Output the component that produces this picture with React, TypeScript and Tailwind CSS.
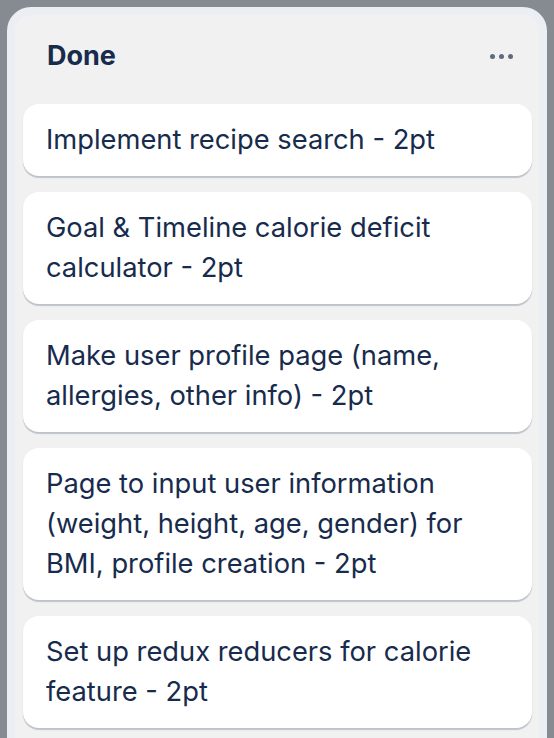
import React from "react";

const cards: string[][] = [
  ["Implement recipe search - 2pt"],
  ["Goal & Timeline calorie deficit", "calculator - 2pt"],
  ["Make user profile page (name,", "allergies, other info) - 2pt"],
  ["Page to input user information", "(weight, height, age, gender) for", "BMI, profile creation - 2pt"],
  ["Set up redux reducers for calorie", "feature - 2pt"],
];

export default function App() {
  return (
    <div
      className="h-[738px] w-[554px] overflow-hidden bg-[#868b91] pl-[7px] pr-[7px] pt-[7px]"
      style={{ fontFamily: "Inter, 'Noto Sans', sans-serif" }}
    >
      <div className="h-[760px] rounded-[24px] border-[8px] border-[#ebeff3] bg-[#f1f1f2] pl-[8px] pr-[7px] pt-[8px]">
        <div className="flex h-[66px] items-center justify-between pl-[24px] pr-[19px]">
          <span className="text-[27px] font-bold text-[#172b4d]">Done</span>
          <div className="flex items-center gap-[4px]">
            <span className="block h-[5px] w-[5px] rounded-full bg-[#5e6b7e]" />
            <span className="block h-[5px] w-[5px] rounded-full bg-[#5e6b7e]" />
            <span className="block h-[5px] w-[5px] rounded-full bg-[#5e6b7e]" />
          </div>
        </div>
        <div className="mt-[15px] flex flex-col gap-[16px]">
          {cards.map((lines, i) => (
            <div
              key={i}
              className="rounded-[16px] bg-white px-[23px] py-[16px] text-[27.3px] leading-[40px] text-[#172b4d] shadow-[0_2px_1px_rgba(9,30,66,0.22)]"
            >
              {lines.map((l, j) => (
                <div key={j} className="whitespace-nowrap">
                  {l}
                </div>
              ))}
            </div>
          ))}
        </div>
      </div>
    </div>
  );
}
